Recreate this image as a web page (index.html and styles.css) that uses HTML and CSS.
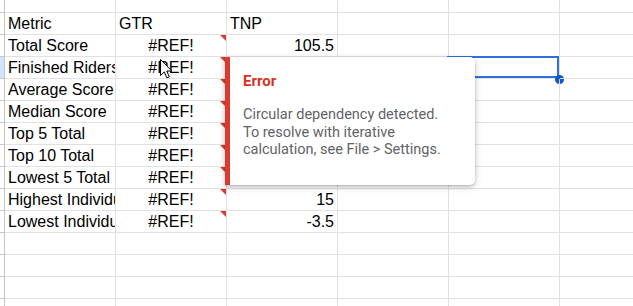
FILE: index.html
```html
<!DOCTYPE html>
<html lang="en">
<head>
    <meta charset="UTF-8">
    <meta name="viewport" content="width=device-width, initial-scale=1.0">
    <title>Scores</title>
    <link rel="stylesheet" href="styles.css">
</head>
<body>
    <div class="sheet">
        <!-- partial row at the top -->
        <div class="rh"></div><div class="cell"></div><div class="cell"></div><div class="cell"></div><div class="cell"></div><div class="cell"></div><div class="cell"></div>

        <div class="rh"></div><div class="cell">Metric</div><div class="cell">GTR</div><div class="cell">TNP</div><div class="cell"></div><div class="cell"></div><div class="cell"></div>
        <div class="rh"></div><div class="cell">Total Score</div><div class="cell err">#REF!</div><div class="cell num">105.5</div><div class="cell"></div><div class="cell"></div><div class="cell"></div>
        <div class="rh active"></div><div class="cell">Finished Riders</div><div class="cell err">#REF!</div><div class="cell num"></div><div class="cell"></div><div class="cell selected"><span class="handle"></span></div><div class="cell"></div>
        <div class="rh"></div><div class="cell">Average Score</div><div class="cell err">#REF!</div><div class="cell num"></div><div class="cell"></div><div class="cell"></div><div class="cell"></div>
        <div class="rh"></div><div class="cell">Median Score</div><div class="cell err">#REF!</div><div class="cell num"></div><div class="cell"></div><div class="cell"></div><div class="cell"></div>
        <div class="rh"></div><div class="cell">Top 5 Total</div><div class="cell err">#REF!</div><div class="cell num"></div><div class="cell"></div><div class="cell"></div><div class="cell"></div>
        <div class="rh"></div><div class="cell">Top 10 Total</div><div class="cell err">#REF!</div><div class="cell num"></div><div class="cell"></div><div class="cell"></div><div class="cell"></div>
        <div class="rh"></div><div class="cell">Lowest 5 Total</div><div class="cell err">#REF!</div><div class="cell num"></div><div class="cell"></div><div class="cell"></div><div class="cell"></div>
        <div class="rh"></div><div class="cell">Highest Individual</div><div class="cell err">#REF!</div><div class="cell num">15</div><div class="cell"></div><div class="cell"></div><div class="cell"></div>
        <div class="rh"></div><div class="cell">Lowest Individual</div><div class="cell err">#REF!</div><div class="cell num">-3.5</div><div class="cell"></div><div class="cell"></div><div class="cell"></div>
        <div class="rh"></div><div class="cell"></div><div class="cell"></div><div class="cell"></div><div class="cell"></div><div class="cell"></div><div class="cell"></div>
        <div class="rh"></div><div class="cell"></div><div class="cell"></div><div class="cell"></div><div class="cell"></div><div class="cell"></div><div class="cell"></div>
        <div class="rh"></div><div class="cell"></div><div class="cell"></div><div class="cell"></div><div class="cell"></div><div class="cell"></div><div class="cell"></div>
        <div class="rh"></div><div class="cell"></div><div class="cell"></div><div class="cell"></div><div class="cell"></div><div class="cell"></div><div class="cell"></div>
    </div>

    <div class="errorTip">
        <div class="errorTitle">Error</div>
        <div class="errorText">Circular dependency detected. To resolve with iterative calculation, see File &gt; Settings.</div>
    </div>

    <svg class="pointer" width="13" height="20" viewBox="0 0 13 20">
        <path d="M0.5 0.5 L0.5 16.5 L4.3 12.9 L6.9 18.9 L9.3 17.9 L6.8 12 L11.8 12 Z" fill="#fff" stroke="#000" stroke-width="1" stroke-linejoin="round"/>
    </svg>
</body>
</html>
```

FILE: styles.css
```css
* {
    margin: 0;
    box-sizing: border-box;
}
body {
    position: relative;
    width: 633px;
    height: 306px;
    overflow: hidden;
    background: #fff;
    font-family: "Liberation Sans", Arial, sans-serif;
}
.sheet {
    display: grid;
    grid-template-columns: 5px repeat(6, 111px);
    grid-template-rows: 13px;
    grid-auto-rows: 22px;
}
.rh {
    border-right: 1px solid #c4c7c5;
    border-bottom: 1px solid #c4c7c5;
    background: #fff;
}
.rh.active {
    background: #d3e3fd;
}
.cell {
    position: relative;
    border-right: 1px solid #e1e1e1;
    border-bottom: 1px solid #e1e1e1;
    padding: 0 3px;
    font-size: 16px;
    line-height: 21px;
    color: #000;
    white-space: nowrap;
    overflow: hidden;
}
.num {
    text-align: right;
}
.err {
    text-align: center;
}
/* little red corner flag on cells holding an error */
.err::after {
    content: "";
    position: absolute;
    top: 0;
    right: 0;
    border-top: 6px solid #db3a2f;
    border-left: 6px solid transparent;
}
.selected {
    overflow: visible;
}
.selected::before {
    content: "";
    position: absolute;
    top: -1px;
    left: -2px;
    right: 0;
    bottom: 0;
    border: 2px solid #2f6fde;
}
.handle {
    position: absolute;
    left: 110px;
    top: 22px;
    width: 9px;
    height: 9px;
    margin: -4px 0 0 -4px;
    border-radius: 50%;
    background: #0b57d0;
}
.errorTip {
    position: absolute;
    left: 225px;
    top: 57px;
    width: 250px;
    height: 128px;
    padding: 15px 30px 0 13px;
    background: #fff;
    border-left: 5px solid #db3a2f;
    border-radius: 0 5px 5px 0;
    box-shadow: 0 2px 6px rgba(0, 0, 0, 0.25), 0 1px 2px rgba(0, 0, 0, 0.12);
    font-family: Roboto, "Liberation Sans", sans-serif;
}
.errorTitle {
    color: #d93025;
    font-size: 15px;
    font-weight: 700;
    line-height: 18px;
}
.errorText {
    margin-top: 16px;
    color: #5f6368;
    font-size: 14.5px;
    line-height: 17.5px;
}
.pointer {
    position: absolute;
    left: 160px;
    top: 59px;
}
```
